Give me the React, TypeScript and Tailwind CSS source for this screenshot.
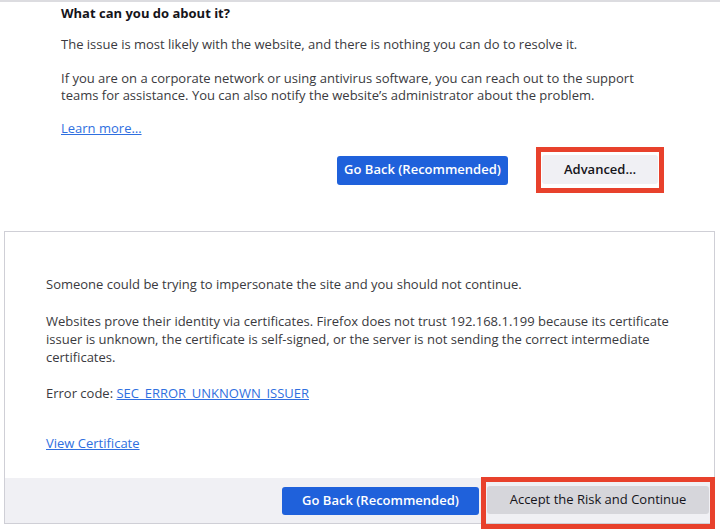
export default function App() {
  const font = { fontFamily: '"Open Sans", "Noto Sans", Arial, sans-serif' };
  return (
    <div className="w-[720px] h-[529px] overflow-hidden bg-white" style={font}>
      {/* top part of the error page */}
      <div className="h-[222px] border-t-2 border-[#dcdce0] pl-[61px] pr-[30px] text-[#3a3a40]">
        <h2 className="mt-[2px] text-[13px] leading-[18px] font-bold text-[#15141a]">What can you do about it?</h2>
        <p className="mt-[14px] text-[13px] leading-[17px]">
          The issue is most likely with the website, and there is nothing you can do to resolve it.
        </p>
        <p className="mt-[17px] text-[13px] leading-[17px]">
          If you are on a corporate network or using antivirus software, you can reach out to the support
          <br />
          teams for assistance. You can also notify the website’s administrator about the problem.
        </p>
        <a className="mt-[16px] block w-fit text-[13px] leading-[17px] text-[#2f6fe0] underline">Learn more…</a>
        <div className="mt-[10px] flex items-center justify-end pr-[26px]">
          <button className="h-[29px] w-[171px] rounded-[3px] bg-[#1f61db] text-[13px] font-semibold text-white">
            Go Back (Recommended)
          </button>
          <div className="ml-[28px] border-[5px] border-[#e8412c] px-[1px] pt-[3px] pb-[4px]">
            <button className="h-[29px] w-[116px] rounded-[3px] bg-[#f0f0f4] text-[13px] font-semibold text-[#15141a]">
              Advanced…
            </button>
          </div>
        </div>
      </div>

      {/* advanced panel */}
      <div className="ml-[4px] mt-[9px] w-[711px] border border-[#cfcfd6] text-[#3a3a40]">
        <div className="pl-[41px] pr-[30px] pt-[43px]">
          <p className="text-[13px] leading-[18px]">
            Someone could be trying to impersonate the site and you should not continue.
          </p>
          <p className="mt-[19px] text-[13px] leading-[18px]">
            Websites prove their identity via certificates. Firefox does not trust 192.168.1.199 because its certificate
            issuer is unknown, the certificate is self-signed, or the server is not sending the correct intermediate
            certificates.
          </p>
          <p className="mt-[18px] text-[13px] leading-[18px]">
            Error code: <a className="text-[#2f6fe0] underline">SEC_ERROR_UNKNOWN_ISSUER</a>
          </p>
          <a className="mt-[32px] block w-fit text-[13px] leading-[18px] text-[#2f6fe0] underline">View Certificate</a>
        </div>
        <div className="mt-[26px] flex h-[45px] items-start justify-end bg-[#f0f0f4]">
          <button className="self-center h-[28px] w-[197px] rounded-[3px] bg-[#1f61db] text-[13px] font-semibold text-white">
            Go Back (Recommended)
          </button>
          <div className="-mr-[1px] -mt-[1px] ml-[2px] h-[52px] border-[5px] border-[#e8412c] px-[1px] pt-[4px]">
            <button className="h-[28px] w-[222px] rounded-[3px] bg-[#d6d6db] text-[13px] font-medium text-[#15141a]">
              Accept the Risk and Continue
            </button>
          </div>
        </div>
      </div>
    </div>
  );
}
